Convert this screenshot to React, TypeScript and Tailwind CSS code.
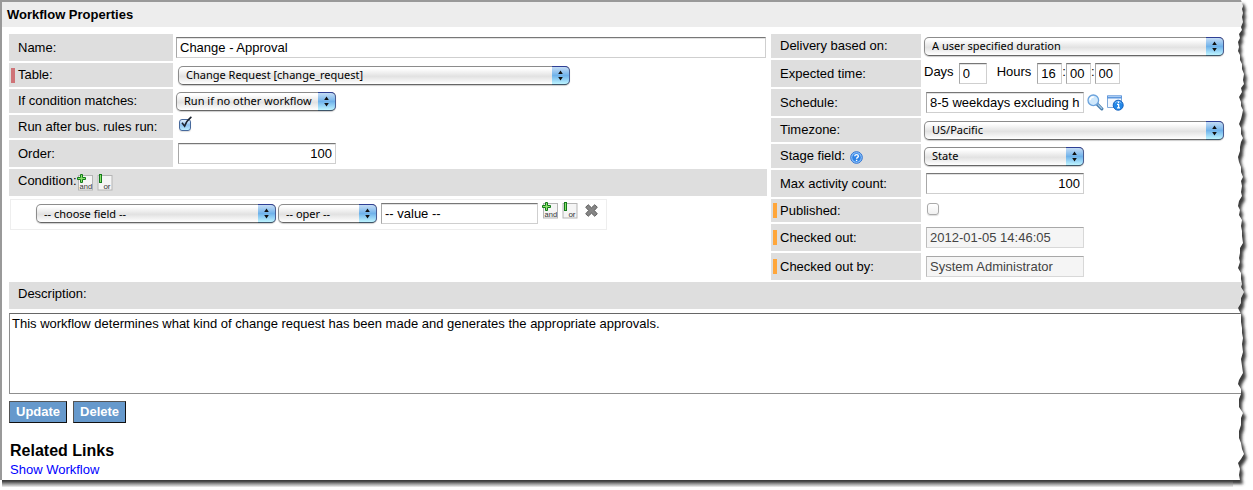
import { useId, type ReactNode } from "react";

const field =
  "h-[21px] min-w-0 border border-[#cfcfcf] border-t-[#777] border-l-[#a8a8a8] bg-white px-[3px] text-[13px] leading-4 shadow-[inset_0_1px_0_#e2e2e2] outline-none";

const readOnlyField =
  "h-[21px] w-[158px] min-w-0 border border-[#d8d8d8] border-t-[#a8a8a8] border-l-[#bdbdbd] bg-[#f5f5f5] px-[3px] text-[13px] leading-4 text-[#444] outline-none";

function Row({
  label,
  htmlFor,
  marker,
  height,
  icon,
  children,
  side = "left",
}: {
  label: string;
  htmlFor: string;
  marker?: "required" | "readonly";
  height: string;
  icon?: ReactNode;
  children: ReactNode;
  side?: "left" | "right";
}) {
  return (
    <div className={`flex items-center gap-[3px] ${height}`}>
      <div
        className={`flex h-full shrink-0 items-center bg-[#dedede] ${side === "left" ? "w-[164px]" : "w-[150px]"}`}
      >
        <span
          className={`mr-[3px] ml-0.5 h-[15px] w-1 ${
            marker === "required" ? "bg-[#cf7377]" : marker === "readonly" ? "bg-[#ffa63a]" : ""
          }`}
        />
        <label htmlFor={htmlFor} className="whitespace-nowrap">
          {label}
        </label>
        {icon}
      </div>
      {children}
    </div>
  );
}

function Popup({ id, label, value, width }: { id: string; label?: string; value: string; width: string }) {
  return (
    <div className={`relative h-[19px] ${width}`}>
      <select
        id={id}
        aria-label={label}
        defaultValue={value}
        className="h-[19px] w-full appearance-none rounded-[5px] border border-[#8c8c8c] border-b-[#666] bg-linear-to-b from-white from-10% via-[#e2e2e2] via-55% to-white pr-[22px] pl-[7px] font-['Noto_Sans',sans-serif] text-[11px] leading-4 font-normal text-black shadow-[0_1px_1px_#00000033] outline-none"
      >
        <option>{value}</option>
      </select>
      <span className="pointer-events-none absolute top-0 right-0 flex h-[19px] w-[18px] items-center justify-center rounded-r-[5px] border border-l-0 border-[#4a5d92] border-t-[#2f3f94] border-b-[#3d5468] bg-linear-to-b from-[#c4dcf5] via-[#6fb2ea] via-50% to-[#bdf4ff]">
        <svg width="7" height="11" viewBox="0 0 7 11" aria-hidden="true">
          <path d="M3.5 0.5 5.8 4H1.2ZM3.5 10.5 5.8 7H1.2Z" fill="#111" />
        </svg>
      </span>
    </div>
  );
}

function Tick({ id, checked }: { id: string; checked?: boolean }) {
  return (
    <span className="relative mb-1 ml-[3px] flex">
      <input
        id={id}
        type="checkbox"
        defaultChecked={checked}
        className="size-3 appearance-none rounded-[3px] border border-[#aaa] bg-linear-to-b from-white to-[#f0f0f0] shadow-[0_1px_1px_#00000022] checked:border-[#47699c] checked:from-[#e4f1fd] checked:via-[#8fc2f0] checked:to-[#b9ecff]"
      />
      {checked && (
        <svg
          className="pointer-events-none absolute -top-1 left-0"
          width="14"
          height="16"
          viewBox="0 0 14 16"
          aria-hidden="true"
        >
          <path d="M3 7.8 5.6 11.2C7 7.2 9 4.4 12.4 1.8" fill="none" stroke="#1c2430" strokeWidth="1.6" />
        </svg>
      )}
    </span>
  );
}

function AndIcon() {
  return (
    <svg width="16" height="17" viewBox="0 0 16 17" aria-hidden="true">
      <rect x="1.5" y="1.5" width="14" height="14.5" fill="#f5f5f5" stroke="#b5b5b5" />
      <text x="2.6" y="14.6" fontSize="7.5" fontFamily="Liberation Sans, sans-serif" fill="#333">
        and
      </text>
      <path d="M3.5 .5h2v3h3v2h-3v3h-2v-3h-3v-2h3z" fill="#8be36a" stroke="#147a1c" />
    </svg>
  );
}

function OrIcon() {
  return (
    <svg width="16" height="17" viewBox="0 0 16 17" aria-hidden="true">
      <rect x="1" y="1.5" width="14" height="14.5" fill="#f5f5f5" stroke="#b5b5b5" />
      <text x="6.4" y="14.6" fontSize="8" fontFamily="Liberation Sans, sans-serif" fill="#333">
        or
      </text>
      <rect x="2.5" y=".5" width="2" height="8" fill="#8be36a" stroke="#147a1c" />
    </svg>
  );
}

function AndOr() {
  return (
    <span className="flex gap-1">
      <button type="button" aria-label="Add and condition">
        <AndIcon />
      </button>
      <button type="button" aria-label="Add or condition">
        <OrIcon />
      </button>
    </span>
  );
}

function RemoveIcon() {
  return (
    <svg width="13" height="13" viewBox="0 0 13 13" aria-hidden="true">
      <path
        d="M3.2.7 6.5 3.8 9.8.7 12.3 3.2 9.3 6.5 12.3 9.8 9.8 12.3 6.5 9.2 3.2 12.3.7 9.8 3.7 6.5.7 3.2Z"
        fill="#858585"
        stroke="#5e5e5e"
        strokeLinejoin="round"
      />
    </svg>
  );
}

function SearchIcon() {
  return (
    <svg width="17" height="17" viewBox="0 0 17 17" aria-hidden="true">
      <path d="m10.5 10.5 4.3 4.3" stroke="#4b7fae" strokeWidth="3.2" strokeLinecap="round" />
      <path d="m11 10.6 3.7 3.7" stroke="#a9cdec" strokeWidth="1.2" strokeLinecap="round" />
      <circle cx="6.3" cy="6.3" r="5.3" fill="#cfe8fc" stroke="#6aa2dc" strokeWidth="1.3" />
      <path d="M3 6.2C3.2 4 4.8 2.9 6.8 3" fill="none" stroke="#fff" strokeWidth="1.6" />
    </svg>
  );
}

function RecordInfoIcon() {
  return (
    <svg width="17" height="16" viewBox="0 0 17 16" aria-hidden="true">
      <path d="M.5 1h14v11.5H.5Z" fill="#f2f8ff" stroke="#7fa9da" />
      <path d="M0 .5h15v3H0Z" fill="#5e97dc" />
      <path d="M1 1.5h13" stroke="#a8cbf3" />
      <circle cx="11.2" cy="10.2" r="5" fill="#2388e8" stroke="#1763bd" />
      <path d="M8 8.2A3.8 3.8 0 0 1 14.4 8.2" fill="none" stroke="#84c0fb" />
      <path d="M11.5 6.6v1.5M10 9.4h1.6v3.4M10 12.9h3" fill="none" stroke="#fff" strokeWidth="1.3" />
    </svg>
  );
}

function HelpIcon() {
  return (
    <svg className="mt-0.5 ml-[5px]" width="13" height="13" viewBox="0 0 13 13" aria-hidden="true">
      <circle cx="6.5" cy="6.5" r="5.8" fill="#8fc3fa" stroke="#2a6fd0" />
      <circle cx="6.5" cy="6.5" r="4.3" fill="#2f83e6" />
      <path
        d="M4.7 5.2C4.8 3.1 8.4 3.1 8.4 5.2 8.4 6.4 6.6 6.3 6.6 7.8M6.6 8.8v1.3"
        fill="none"
        stroke="#fff"
        strokeWidth="1.4"
      />
    </svg>
  );
}

const tear =
  "8 0 9 3 10 6 9 9 10 13 9 17 10 22 8 27 9 30 6 34 7 38 5 42 6 47 5 51 7 55 7 60 9 64 9 69 11 74 10 80 11 84 8 88 9 92 6 97 8 102 8 106 10 110 9 115 8 119 6 124 8 128 8 134 10 138 8 142 7 147 7 151 5 157 6 162 8 167 8 172 10 177 8 181 9 186 8 192 9 196 6 201 5 206 7 210 6 215 9 220 8 226 9 231 9 236 10 243 7 248 7 253 6 258 7 262 5 268 8 273 8 279 9 284 8 287 11 292 8 298 8 303 5 308 8 314 8 322 9 328 9 333 10 338 9 344 10 352 8 359 9 366 10 373 6 380 5 384 8 389 8 394 6 399 6 407 10 413 8 418 8 425 6 431 6 438 8 443 9 449 11 454 8 459 5 463 7 469 6 475 7 480";

function TornEdge() {
  const clip = useId();
  const blur = useId();
  return (
    <svg
      className="pointer-events-none absolute top-0 right-0 h-full w-5"
      viewBox="0 0 20 490"
      preserveAspectRatio="none"
      aria-hidden="true"
    >
      <defs>
        <clipPath id={clip}>
          <polygon points={`${tear} 0 480 0 490 20 490 20 0`} />
        </clipPath>
        <filter id={blur} filterUnits="userSpaceOnUse" x="-60" y="-20" width="100" height="530">
          <feGaussianBlur stdDeviation="1.8" />
        </filter>
      </defs>
      <g clipPath={`url(#${clip})`}>
        <rect width="20" height="490" fill="#fff" />
        <g filter={`url(#${blur})`}>
          <polygon points={`-40 0 ${tear} -40 480`} transform="translate(3 4)" fill="#3a3a3a" />
        </g>
      </g>
    </svg>
  );
}

export default function App() {
  return (
    <div className="relative overflow-hidden bg-white font-['Liberation_Sans',Arial,sans-serif] text-[13px] leading-4 text-black">
      <main className="border-t-2 border-l-2 border-[#999] pb-0.5">
        <h1 className="flex h-[25px] items-center bg-[#ededed] px-[5px] text-[13px] font-bold">Workflow Properties</h1>

        <form className="pt-[7px] pr-2 pl-[7px]" onSubmit={(e) => e.preventDefault()}>
          <div className="grid grid-cols-[minmax(0,758fr)_minmax(0,474fr)] gap-1">
            <div className="flex flex-col gap-0.5">
              <Row label="Name:" htmlFor="name" height="h-[27px]">
                <input id="name" defaultValue="Change - Approval" className={`${field} mr-px flex-1`} />
              </Row>
              <Row label="Table:" htmlFor="table" marker="required" height="h-6">
                <Popup id="table" value="Change Request [change_request]" width="ml-0.5 w-[392px]" />
              </Row>
              <Row label="If condition matches:" htmlFor="condition-matches" height="h-6">
                <Popup id="condition-matches" value="Run if no other workflow" width="w-[160px]" />
              </Row>
              <Row label="Run after bus. rules run:" htmlFor="run-after" height="h-[23px]">
                <Tick id="run-after" checked />
              </Row>
              <Row label="Order:" htmlFor="order" height="h-[27px]">
                <input id="order" defaultValue="100" className={`${field} ml-0.5 w-[158px] text-right`} />
              </Row>
              <div className="flex h-[27px] items-center bg-[#dedede] pl-[9px]">
                <span className="mb-1">Condition:</span>
                <AndOr />
              </div>
              <div className="mt-px ml-px flex h-[31px] w-[597px] items-center gap-0.5 border border-[#eee] pb-0.5 pl-[25px]">
                <Popup id="filter-field" label="Field" value="-- choose field --" width="w-[240px]" />
                <Popup id="filter-oper" label="Operator" value="-- oper --" width="w-[99px]" />
                <input aria-label="Value" defaultValue="-- value --" className={`${field} ml-0.5 w-[157px]`} />
                <span className="mb-1.5 ml-0.5 flex items-center gap-[7px]">
                  <AndOr />
                  <button type="button" aria-label="Remove condition">
                    <RemoveIcon />
                  </button>
                </span>
              </div>
            </div>

            <div className="flex flex-col gap-0.5">
              <Row side="right" label="Delivery based on:" htmlFor="delivery" height="h-6">
                <Popup id="delivery" value="A user specified duration" width="w-[300px]" />
              </Row>
              <Row side="right" label="Expected time:" htmlFor="days" height="h-[27px]">
                <label htmlFor="days" className="mb-1">
                  Days
                </label>
                <input id="days" defaultValue="0" className={`${field} ml-0.5 w-7`} />
                <label htmlFor="hours" className="mb-1 ml-[7px]">
                  Hours
                </label>
                <span className="ml-[3px] flex items-center">
                  <input id="hours" defaultValue="16" className={`${field} w-[25px]`} />
                  <span className="mb-1">:</span>
                  <input aria-label="Minutes" defaultValue="00" className={`${field} w-[25px]`} />
                  <span className="mb-1">:</span>
                  <input aria-label="Seconds" defaultValue="00" className={`${field} w-[25px]`} />
                </span>
              </Row>
              <Row side="right" label="Schedule:" htmlFor="schedule" height="h-[27px]">
                <input
                  id="schedule"
                  defaultValue="8-5 weekdays excluding h"
                  className={`${field} ml-0.5 w-[158px]`}
                />
                <button type="button" aria-label="Look up schedule">
                  <SearchIcon />
                </button>
                <button type="button" aria-label="Schedule details">
                  <RecordInfoIcon />
                </button>
              </Row>
              <Row side="right" label="Timezone:" htmlFor="timezone" height="h-6">
                <Popup id="timezone" value="US/Pacific" width="w-[300px]" />
              </Row>
              <Row side="right" label="Stage field:" htmlFor="stage" height="h-6" icon={<HelpIcon />}>
                <Popup id="stage" value="State" width="w-[160px]" />
              </Row>
              <Row side="right" label="Max activity count:" htmlFor="max" height="h-[27px]">
                <input id="max" defaultValue="100" className={`${field} ml-0.5 w-[158px] text-right`} />
              </Row>
              <Row side="right" label="Published:" htmlFor="published" marker="readonly" height="h-[23px]">
                <Tick id="published" />
              </Row>
              <Row side="right" label="Checked out:" htmlFor="checked-out" marker="readonly" height="h-[27px]">
                <input
                  id="checked-out"
                  readOnly
                  value="2012-01-05 14:46:05"
                  className={`${readOnlyField} ml-0.5`}
                />
              </Row>
              <Row side="right" label="Checked out by:" htmlFor="checked-out-by" marker="readonly" height="h-[27px]">
                <input
                  id="checked-out-by"
                  readOnly
                  value="System Administrator"
                  className={`${readOnlyField} ml-0.5`}
                />
              </Row>
            </div>
          </div>

          <div className="mt-0.5 flex h-[27px] items-center bg-[#dedede] pb-1 pl-[9px]">
            <label htmlFor="description">Description:</label>
          </div>
          <textarea
            id="description"
            defaultValue="This workflow determines what kind of change request has been made and generates the appropriate approvals."
            className="mt-1 block h-[81px] w-full resize-none border border-[#8f8f8f] border-t-[#666] bg-white px-0.5 py-[2px] text-[13px] leading-4 outline-none"
          />
          <div className="mt-[7px] flex gap-1.5">
            <button
              type="submit"
              className="h-[22px] border border-[#111] border-t-[#555] border-l-[#555] bg-[#6699cc] px-1.5 text-[13px] leading-4 font-bold text-white"
            >
              Update
            </button>
            <button
              type="button"
              className="h-[22px] border border-[#111] border-t-[#555] border-l-[#555] bg-[#6699cc] px-1.5 text-[13px] leading-4 font-bold text-white"
            >
              Delete
            </button>
          </div>
        </form>

        <section className="pt-[18px] pl-2">
          <h2 className="text-base leading-5 font-bold">Related Links</h2>
          <a href="#workflow" className="block leading-[17px] text-[#0000ff]">
            Show Workflow
          </a>
        </section>
      </main>
      <div className="ml-0.5 h-2.5 bg-linear-to-b from-[#3d3d3d] from-10% via-[#9c9c9c] via-40% to-white to-75%" />
      <TornEdge />
    </div>
  );
}
